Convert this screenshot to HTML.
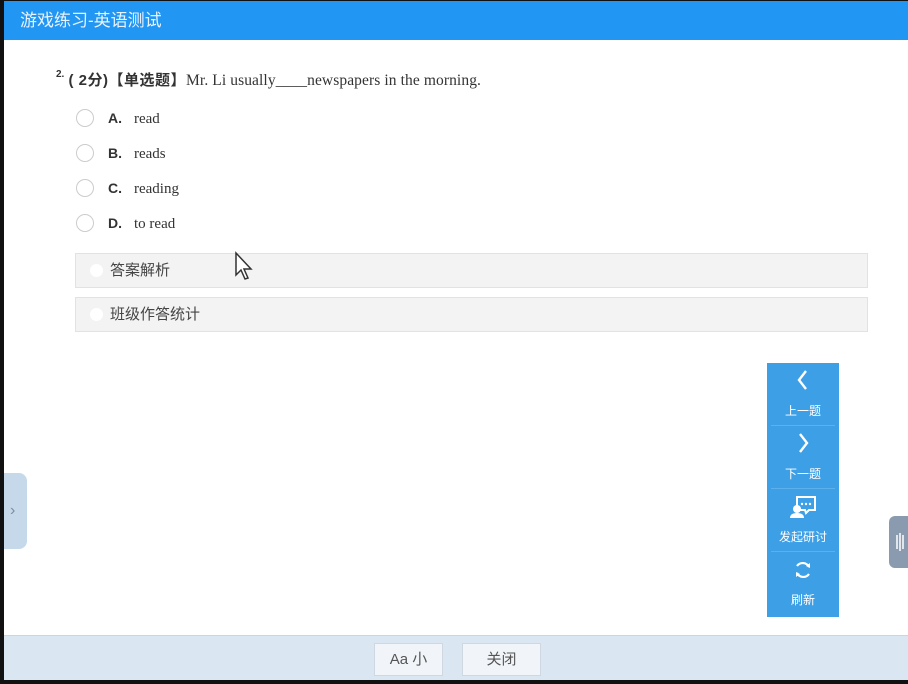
<!DOCTYPE html>
<html><head><meta charset="utf-8"><style>
*{margin:0;padding:0;box-sizing:border-box}
body{width:908px;height:684px;background:#111;position:relative;overflow:hidden;font-family:"Liberation Sans","Noto Sans CJK SC",sans-serif}
#page{position:absolute;left:4px;top:1px;width:904px;height:679px;background:#fff;overflow:hidden}
.hdr{position:absolute;left:0;top:0;width:904px;height:39px;background:#2196f3;color:#e8f3fe;font-size:17px;line-height:39px;padding-left:16px}
.q{position:absolute;left:52px;top:68px;font-size:15px;color:#333;white-space:nowrap}
.q .num{font-size:10px;font-weight:bold;vertical-align:top}
.q b{font-weight:bold;letter-spacing:0.5px}
.q .en{font-family:"Liberation Serif",serif;font-size:15.5px;letter-spacing:0.1px}
.opt{position:absolute;left:72px;height:20px;font-size:14px;color:#333}
.opt i{position:absolute;left:0;top:1px;width:18px;height:18px;border:1px solid #ccc;border-radius:50%}
.opt b{position:absolute;left:32px;top:2px;font-weight:bold}
.opt span{position:absolute;left:58px;top:3px;font-family:"Liberation Serif",serif;font-size:15px;white-space:nowrap}
.bar{position:absolute;left:71px;width:793px;height:35px;background:#f3f3f3;border:1px solid #e2e2e2;font-size:15px;color:#444;line-height:33px;padding-left:34px}
.bar i{position:absolute;left:14px;top:10px;width:13px;height:13px;border-radius:50%;background:#fff}
.side{position:absolute;left:763px;top:362px;width:72px;height:254px;background:#3d9fe6;color:#fff;font-size:12px;text-align:center}
.side div{height:63px;border-bottom:1px solid #5cb0ec;margin:0 4px;position:relative}
.side div:last-child{border:none}
.side svg{position:absolute;left:50%;transform:translateX(-50%)}
.side span{position:absolute;left:0;right:0;top:39px}
.ftr{position:absolute;left:0;top:634px;width:904px;height:45px;background:#dae6f1;border-top:1px solid #c9d6e2}
.btn{position:absolute;top:7px;height:33px;background:#f1f5f9;border:1px solid #cfd8e0;font-size:15px;color:#555;text-align:center;line-height:31px}
.ltab{position:absolute;left:0;top:472px;width:23px;height:76px;background:#c6d9ea;border-radius:0 8px 8px 0;color:#7a8ea0;font-size:16px;line-height:76px;padding-left:6px}
.rtab{position:absolute;left:885px;top:515px;width:22px;height:52px;background:#8a9bb0;border-radius:6px 0 0 6px}
</style></head><body><div id="page">
<div class="hdr">游戏练习-英语测试</div>
<div class="q"><span class="num">2.</span> <b>( 2分)【单选题】</b><span class="en">Mr. Li usually____newspapers in the morning.</span></div>
<div class="opt" style="top:107px"><i></i><b>A.</b><span>read</span></div>
<div class="opt" style="top:142px"><i></i><b>B.</b><span>reads</span></div>
<div class="opt" style="top:177px"><i></i><b>C.</b><span>reading</span></div>
<div class="opt" style="top:212px"><i></i><b>D.</b><span>to read</span></div>
<div class="bar" style="top:252px"><i></i>答案解析</div>
<div class="bar" style="top:296px"><i></i>班级作答统计</div>
<svg style="position:absolute;left:230px;top:250px" width="20" height="32" viewBox="0 0 20 32"><path d="M2 2 L2 24 L7 19 L11 28 L14 27 L10 18 L17 18 Z" fill="#fff" stroke="#333" stroke-width="1.5"/></svg>
<div class="side">
<div><svg style="top:6px" width="14" height="22" viewBox="0 0 14 22"><path d="M10 2 L3 11 L10 20" fill="none" stroke="#fff" stroke-width="2.4"/></svg><span>上一题</span></div>
<div><svg style="top:6px" width="14" height="22" viewBox="0 0 14 22"><path d="M4 2 L11 11 L4 20" fill="none" stroke="#fff" stroke-width="2.4"/></svg><span>下一题</span></div>
<div><svg style="top:6px" width="28" height="24" viewBox="0 0 28 24"><path d="M8 2 H26 V15 H20 L17 18 L16 15 H8 Z" fill="none" stroke="#fff" stroke-width="2"/><circle cx="13" cy="9" r="1.2" fill="#fff"/><circle cx="17" cy="9" r="1.2" fill="#fff"/><circle cx="21" cy="9" r="1.2" fill="#fff"/><circle cx="8" cy="14" r="4" fill="#fff"/><path d="M1 23 Q1 18 8 18 Q15 18 15 23 Z" fill="#fff"/></svg><span>发起研讨</span></div>
<div><svg style="top:8px" width="20" height="20" viewBox="0 0 20 20"><path d="M16 7 A7 7 0 0 0 4 6 M4 13 A7 7 0 0 0 16 14" fill="none" stroke="#fff" stroke-width="2.2"/><path d="M13 6 L17 8 L17 3 Z M7 14 L3 12 L3 17 Z" fill="#fff"/></svg><span>刷新</span></div>
</div>
<div class="ltab">›</div>
<div class="rtab"><svg width="22" height="52"><path d="M8 19 V33 M11 17 V35 M14 19 V33" stroke="#fff" stroke-width="1.5"/></svg></div>
<div class="ftr">
<div class="btn" style="left:370px;width:69px">Aa 小</div>
<div class="btn" style="left:458px;width:79px">关闭</div>
</div>
</div></body></html>
